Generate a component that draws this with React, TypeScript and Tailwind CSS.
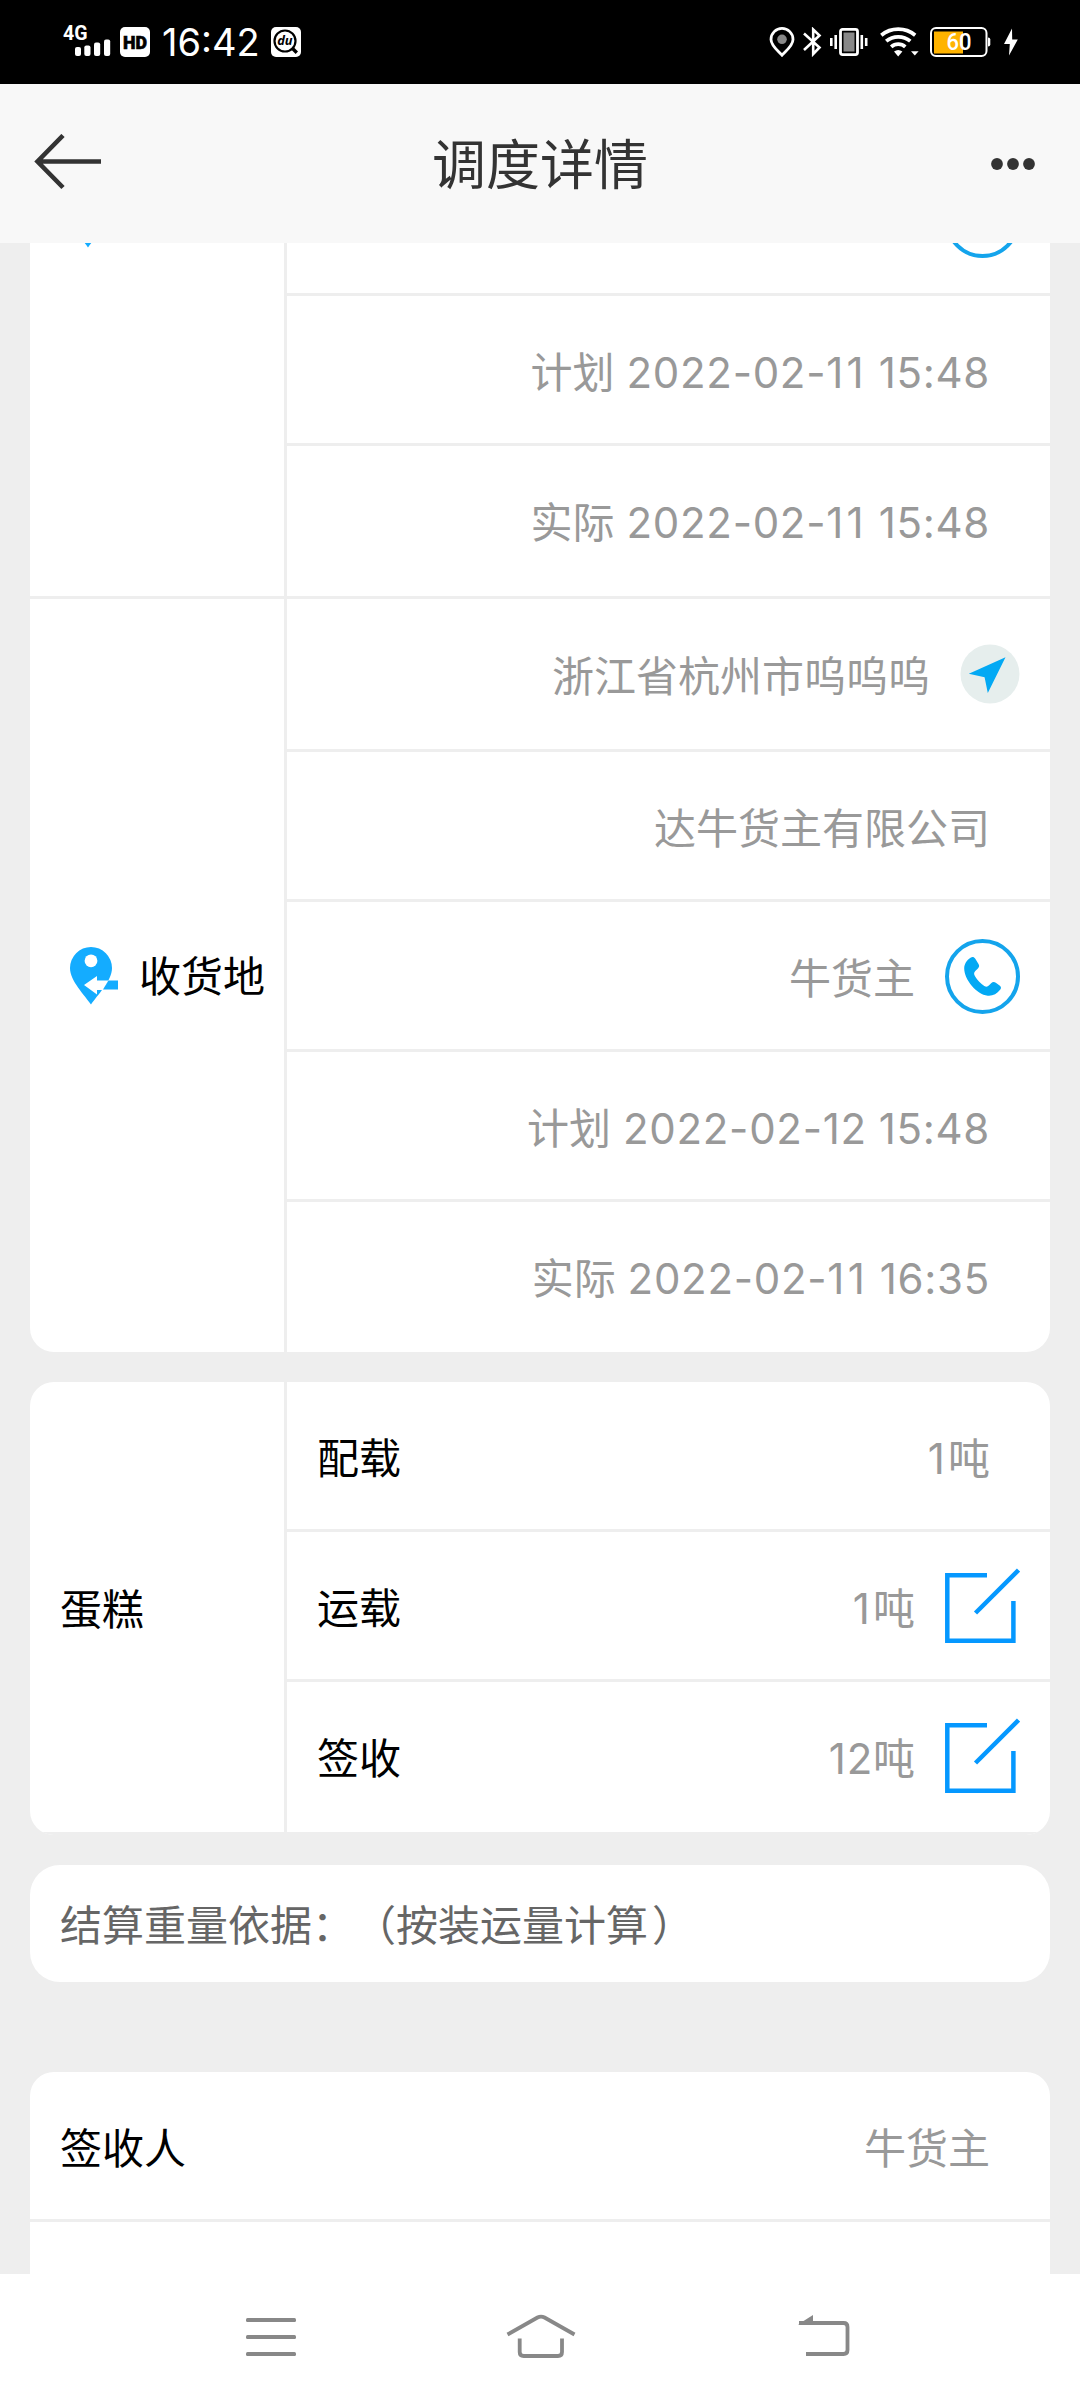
import type { ReactNode } from "react";

type RowData = {
  label?: string;
  value: string;
  action?: ReactNode;
};

function StatusBar() {
  return (
    <header className="flex h-[84px] shrink-0 items-start bg-black text-white">
      <svg className="ml-[58px] mt-[14px]" width="54" height="44" viewBox="-4 -10 54 44" fill="#fff">
        <text
          x="1"
          y="15.500"
          textLength="24.500"
          lengthAdjust="spacingAndGlyphs"
          className="font-['Roboto',sans-serif] text-[20px] font-bold"
        >
          4G
        </text>
        <rect x="13" y="23" width="6" height="9" rx="2" />
        <rect x="22.300" y="21.500" width="6.200" height="10.500" rx="2" />
        <rect x="32" y="18.500" width="6.200" height="13.500" rx="2" />
        <rect x="42" y="15.500" width="6.200" height="16.500" rx="2" />
      </svg>
      <svg className="ml-[8px] mt-[27px]" width="30" height="30" viewBox="0 0 30 30">
        <rect width="30" height="30" rx="5" fill="#fff" />
        <text
          x="3"
          y="22"
          textLength="24"
          lengthAdjust="spacingAndGlyphs"
          fill="#000"
          stroke="#000"
          strokeWidth="0.600"
          className="font-['Roboto',sans-serif] text-[19px] font-black"
        >
          HD
        </text>
      </svg>
      <div className="ml-[12px] mt-[20px] w-[98px] whitespace-nowrap font-['Inter',sans-serif] text-[38px] leading-[44px]">
        16:42
      </div>
      <svg className="ml-[11px] mt-[27px]" width="30" height="30" viewBox="0 0 30 30">
        <rect width="30" height="30" rx="5" fill="#fff" />
        <circle cx="14" cy="14" r="10.500" fill="none" stroke="#000" strokeWidth="2.200" />
        <path d="M20.800 20.800 25.800 25.800" stroke="#000" strokeWidth="3.400" />
        <text
          x="6.200"
          y="18.400"
          textLength="15.400"
          lengthAdjust="spacingAndGlyphs"
          className="font-['Open_Sans',sans-serif] text-[13px] font-bold italic"
        >
          du
        </text>
      </svg>

      <div className="ml-auto mr-[61px] mt-[27px] flex items-start">
        <svg width="26" height="30" viewBox="0 0 26 30">
          <path
            d="M13 28.200C9.500 24.200 2 18.600 2 12.400a11 11 0 0 1 22 0C24 18.600 16.500 24.200 13 28.200Z"
            fill="none"
            stroke="#fff"
            strokeWidth="2.800"
          />
          <circle cx="13" cy="12.300" r="4.800" fill="#888" />
        </svg>
        <svg className="ml-[8px]" width="19" height="30" viewBox="0 0 19 30" fill="none">
          <path d="M1 6.500 16.500 20.500 10.200 27V2.500L16.500 8.500 1 23" stroke="#fff" strokeWidth="2.600" />
        </svg>
        <svg className="ml-[8px]" width="38" height="30" viewBox="0 0 38 30">
          <rect x="10.500" y="2.400" width="17" height="25.200" rx="2" fill="#000" stroke="#fff" strokeWidth="2.800" />
          <rect x="13.500" y="5.500" width="11" height="19" fill="#888" />
          <path d="M1.300 11v8M5.700 8v14M31.800 8v14M36.200 11v8" stroke="#fff" strokeWidth="2.600" />
        </svg>
        <svg className="ml-[12px]" width="39" height="30" viewBox="0 0 39 30" fill="none">
          <g stroke="#fff" strokeWidth="3.700">
            <path d="M1.300 8.200C11 .2 25.500 .2 35.200 8.200" />
            <path d="M6.200 14.200C13 8.300 23.500 8.300 30.300 14.200" />
            <path d="M11.200 19.800C15.200 16.200 21.300 16.200 25.300 19.800" />
          </g>
          <path d="M14 24.500q4.200-3 8.400 0L18.200 29.500Z" fill="#fff" />
          <path d="M31 24.300h7.600L34.800 28.500Z" fill="#fff" />
        </svg>
        <svg className="ml-[11px]" width="61" height="30" viewBox="0 0 61 30">
          <rect x="1" y="1" width="55.500" height="28" rx="5" fill="#000" stroke="#fff" strokeWidth="2" />
          <path d="M4 4.500h29v22H4z" fill="#ffb300" />
          <path d="M58 10.500q2.300 0 2.300 2v5q0 2-2.300 2z" fill="#fff" />
          <text
            x="16.500"
            y="23"
            textLength="25"
            lengthAdjust="spacingAndGlyphs"
            fill="#fff"
            className="font-['Roboto',sans-serif] text-[23px] font-medium"
          >
            60
          </text>
        </svg>
        <svg className="ml-[12px]" width="16" height="30" viewBox="0 0 16 30">
          <path d="M9 1.500 1 17h5.800L6 28.500 14.800 12.500H9.200Z" fill="#fff" />
        </svg>
      </div>
    </header>
  );
}

function TitleBar() {
  return (
    <div className="flex h-[159px] shrink-0 items-center justify-between bg-[#f8f8f8] pl-[34px] pr-[44px] text-[#333]">
      <svg className="mb-[3px]" width="68" height="56" viewBox="0 0 68 56" fill="none" stroke="#333" strokeWidth="4.600">
        <path d="M29 1.500 3.500 27.500 29 53.500M3 27.500H67" />
      </svg>
      <h1 className="ml-[10px] mt-[5px] text-[54px] leading-[72px]">调度详情</h1>
      <svg className="w-[68px]" height="14" viewBox="0 0 68 14" fill="#333">
        <circle cx="29" cy="7" r="5.900" />
        <circle cx="45" cy="7" r="5.900" />
        <circle cx="61" cy="7" r="5.900" />
      </svg>
    </div>
  );
}

function PinIcon() {
  return (
    <svg className="shrink-0" width="48" height="58" viewBox="0 0 48 58">
      <path
        d="M21 57.500C15 48.500 0 34 0 21a21 21 0 0 1 42 0C42 34 27 48.500 21 57.500Z"
        fill="#14acff"
      />
      <circle cx="21" cy="13.800" r="6.400" fill="#fff" />
      <path d="M14 38 27 29v4.500H38.500L33 43H27v4.500Z" fill="#fff" />
      <path d="M38.500 33.500H48v9H33Z" fill="#14acff" />
    </svg>
  );
}

function PhoneIcon() {
  return (
    <svg className="mt-[2px] shrink-0" width="75" height="75" viewBox="0 0 75 75">
      <circle cx="37.500" cy="37.500" r="35.500" fill="none" stroke="#14a4ec" strokeWidth="4" />
      <path
        d="M25.500 18.800c2-1.200 3.400-.8 4.800 1l3.200 5.200c1 1.800.9 3-.6 4.400l-2.600 2.600c-1.600 1.700-1.500 3.200-.3 5.200 2.600 4.200 5.600 7.300 9.300 9.700 1.800 1.100 3.200 1 4.800-.6l2-2c1.500-1.500 3-1.700 4.700-.6l3.800 2.700c1.700 1.300 1.800 2.800.5 4.400-3.200 4.200-7.600 6.400-12.400 5.900C31.500 55.500 19.200 40.500 19.200 29.500c0-4.500 2.600-8.500 6.300-10.700Z"
        fill="#03a9f4"
      />
    </svg>
  );
}

function NavigateIcon() {
  return (
    <svg className="shrink-0" width="60" height="60" viewBox="0 0 60 60">
      <circle cx="30" cy="30" r="29.500" fill="#e6eeed" />
      <path d="M45.500 13.200 8.800 29.800 24.600 33.300 27.800 49Z" fill="#03a9f4" />
    </svg>
  );
}

function EditIcon() {
  return (
    <svg className="shrink-0" width="75" height="75" viewBox="0 0 75 75" fill="none" stroke="#0598ff" strokeWidth="4.500">
      <path d="M42 7.200H2.300V72.700H68.400V33" />
      <path d="M30.500 45 73.500 2" />
    </svg>
  );
}

// 数字加字距，后面不是其他数字的 1 再放宽一些
function Value({ text }: { text: string }) {
  const parts = [...text.matchAll(/(1(?![02-9]))|([\d:-])|[^\d:-]+/g)];
  return parts.map(([part, looseOne, digit], i) => {
    if (looseOne) {
      return (
        <span key={i} className="tracking-[3.2px]">
          {part}
        </span>
      );
    }
    return (
      <span key={i} className={digit ? "tracking-[0.7px]" : undefined}>
        {part}
      </span>
    );
  });
}

function Row({ label, value, action }: RowData) {
  return (
    <div className="flex h-[150px] items-center border-b-[3px] border-[#eee] px-[30px] first:grow last:border-transparent">
      {label && <span className="mt-[6px]">{label}</span>}
      <div className="ml-auto flex items-center gap-[30px] text-[#999]">
        <span className={action ? "mt-[6px]" : "mr-[30px] mt-[6px]"}>
          <Value text={value} />
        </span>
        {action}
      </div>
    </div>
  );
}

const unloadRows: RowData[] = [
  { value: "浙江省杭州市呜呜呜", action: <NavigateIcon /> },
  { value: "达牛货主有限公司" },
  { value: "牛货主", action: <PhoneIcon /> },
  { value: "计划 2022-02-12 15:48" },
  { value: "实际 2022-02-11 16:35" },
];

const cargoRows: RowData[] = [
  { label: "配载", value: "1吨" },
  { label: "运载", value: "1吨", action: <EditIcon /> },
  { label: "签收", value: "12吨", action: <EditIcon /> },
];

function NavBar() {
  return (
    <nav className="flex h-[126px] shrink-0 items-start bg-white pt-[40px]">
      <svg className="ml-[246px]" width="50" height="46" viewBox="0 0 50 46" fill="#888">
        <rect y="4" width="50" height="4" rx="1.500" />
        <rect y="21" width="50" height="4" rx="1.500" />
        <rect y="38" width="50" height="4" rx="1.500" />
      </svg>
      <svg className="ml-[210px]" width="70" height="46" viewBox="0 0 70 46" fill="none" stroke="#888" strokeWidth="3.800">
        <path d="M1.500 20.500 31.500 3.500Q35 1.700 38.500 3.500L68.500 20.500" />
        <path d="M13.700 24.500V38q0 4 4 4H52q4 0 4-4V24.500" />
      </svg>
      <svg className="ml-[222px]" width="52" height="46" viewBox="0 0 52 46">
        <path d="M0 10.500 15 1V10.500Z" fill="#888" />
        <path d="M1 9H45.500q4 0 4 4V36q0 4-4 4H8" fill="none" stroke="#888" strokeWidth="3.800" />
      </svg>
    </nav>
  );
}

export default function App() {
  return (
    <div
      lang="zh-CN"
      className="flex h-[2400px] w-[1080px] flex-col overflow-hidden bg-[#eee] font-['Inter','Noto_Sans_CJK_SC',sans-serif] text-[42px] leading-[60px] text-black"
    >
      <StatusBar />
      <TitleBar />

      <main className="min-h-0 flex-1 overflow-hidden px-[30px]">
        {/* 列表已向上滚动一段距离 */}
        <section className="-mt-[97px] overflow-hidden rounded-[24px] bg-white">
          <div className="flex h-[453px] border-b-[3px] border-[#eee]">
            <div className="w-[257px] shrink-0 border-r-[3px] border-[#eee] pl-[37px] pt-[44px]">
              <PinIcon />
            </div>
            <div className="flex flex-1 flex-col">
              <Row value="" action={<PhoneIcon />} />
              <Row value="计划 2022-02-11 15:48" />
              <Row value="实际 2022-02-11 15:48" />
            </div>
          </div>
          <div className="flex h-[753px]">
            <div className="flex w-[257px] shrink-0 items-center gap-[21px] border-r-[3px] border-[#eee] pl-[40px]">
              <PinIcon />
              <span className="mt-[3px] whitespace-nowrap">收货地</span>
            </div>
            <div className="flex flex-1 flex-col">
              {unloadRows.map((row) => (
                <Row key={row.value} {...row} />
              ))}
            </div>
          </div>
        </section>

        <section className="mt-[30px] overflow-hidden rounded-[24px] bg-white">
          <div className="flex h-[453px] border-b-[3px] border-[#eee]">
            <div className="flex w-[257px] shrink-0 items-center border-r-[3px] border-[#eee] pl-[30px] pt-[5px]">
              蛋糕
            </div>
            <div className="flex flex-1 flex-col">
              {cargoRows.map((row) => (
                <Row key={row.label} {...row} />
              ))}
            </div>
          </div>
        </section>

        <section className="mt-[30px] flex h-[117px] items-center rounded-[30px] bg-white px-[30px] pt-[5px] text-[#666] [text-spacing-trim:space-all]">
          <span>
            结算重量依据：（按装运量计算<span className="ml-[4px]">）</span>
          </span>
        </section>

        <section className="mt-[90px] h-[300px] rounded-t-[24px] bg-white">
          <div className="flex h-[150px] items-center justify-between border-b-[3px] border-[#eee] pl-[30px] pr-[60px] pt-[6px]">
            <span>签收人</span>
            <span className="text-[#999]">牛货主</span>
          </div>
        </section>
      </main>

      <NavBar />
    </div>
  );
}
